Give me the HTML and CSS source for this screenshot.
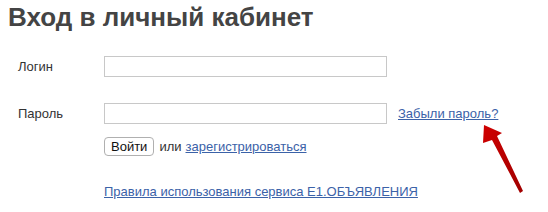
FILE: index.html
```html
<!DOCTYPE html>
<html lang="ru">
<head>
	<meta charset="UTF-8">
	<title>Вход в личный кабинет</title>
	<link rel="stylesheet" href="styles.css">
</head>
<body>
	<h1 class="title">Вход в личный кабинет</h1>
	<div class="form">
		<div class="row">
			<label class="label" for="login">Логин</label>
			<input class="field" type="text" id="login">
		</div>
		<div class="row row-pass">
			<label class="label" for="pass">Пароль</label>
			<input class="field" type="password" id="pass">
			<a class="link forgot" href="#">Забыли пароль?</a>
		</div>
		<div class="row row-btn">
			<button class="btn" type="button">Войти</button>
			<span class="or">или</span>
			<a class="link" href="#">зарегистрироваться</a>
		</div>
		<div class="row row-rules">
			<a class="link" href="#">Правила использования сервиса E1.ОБЪЯВЛЕНИЯ</a>
		</div>
	</div>
	<svg class="arrow" width="50" height="75" viewBox="0 0 50 75">
		<defs>
			<linearGradient id="red" x1="0" y1="0" x2="1" y2="1">
				<stop offset="0" stop-color="#d00000"/>
				<stop offset="1" stop-color="#a00000"/>
			</linearGradient>
		</defs>
		<polygon fill="url(#red)" points="3,0 21,8 16,11 42,66 39,68 11,15 2,18"/>
	</svg>
</body>
</html>
```
FILE: styles.css
```css
body{margin: 0;padding: 0 8px;font-family: "Liberation Sans", Arial, sans-serif;font-size: 13px;color: #333;background: #fff;position: relative;}
.title{margin: 0;padding-top: 2px;font-size: 26px;font-weight: bold;color: #444;line-height: 30px;}
.form{padding: 23px 0 0 10px;}
.row{display: flex;align-items: center;height: 22px;}
.row-pass{margin-top: 25px;}
.row-btn{margin-top: 12px;height: 20px;}
.row-rules{margin-top: 24px;padding-left: 86px;}
.label{width: 86px;}
.field{width: 283px;height: 21px;box-sizing: border-box;border: 1px solid #c8c8c8;padding: 0 3px;margin: 0;font: inherit;}
.forgot{margin-left: 11px;}
.btn{margin: 0 0 0 86px;height: 19px;padding: 0 6px;font: inherit;color: #111;background: #fff;border: 1px solid #b0b0b0;border-radius: 4px;}
.or{margin: 0 4px 0 5px;}
.link{color: #3b62a8;text-decoration: underline;}
.arrow{position: absolute;left: 481px;top: 125px;}
```
